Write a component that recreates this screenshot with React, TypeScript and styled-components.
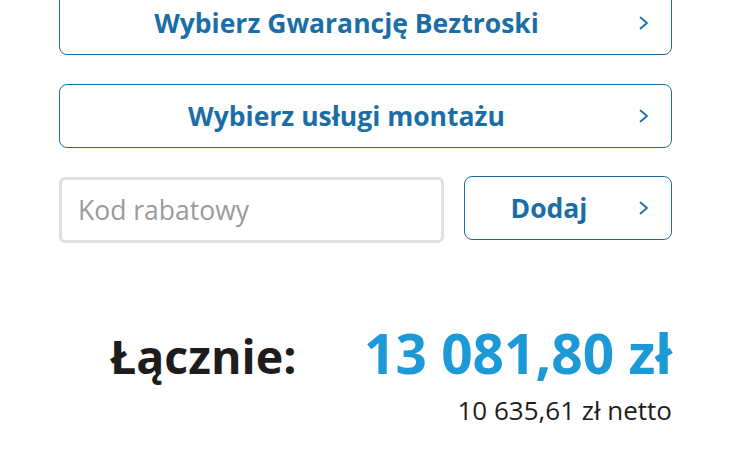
import React from "react";
import styled, {createGlobalStyle} from "styled-components";

const GlobalStyle = createGlobalStyle`
    html, body {
        margin: 0;
        padding: 0;
        background: #ffffff;
        font-family: "Open Sans", "Noto Sans", sans-serif;
    }
`

const Page = styled.div`
    width: 730px;
    height: 456px;
    overflow: hidden;
    box-sizing: border-box;
    padding: 0 58px 0 59px;
`

const Content = styled.div`
    margin-top: -9px;
    display: flex;
    flex-direction: column;
    gap: 29px;
`

const OptionButton = styled.button<{$wide?: boolean}>`
    display: flex;
    align-items: center;
    box-sizing: border-box;
    width: ${p => p.$wide ? "100%" : "208px"};
    height: 64px;
    padding: 0;
    background: #ffffff;
    border: 1.5px solid #1b6ea5;
    border-radius: 8px;
    color: #1b6ea5;
    font-family: inherit;
    font-size: 26.5px;
    font-weight: 700;
    cursor: pointer;
    .label{
        flex: 1;
        text-align: center;
    }
    .chevron{
        width: 38px;
        padding-left: 6px;
        box-sizing: border-box;
        display: flex;
        align-items: center;
        justify-content: flex-start;
    }
`

const Row = styled.div`
    display: flex;
    gap: 20px;
    margin-top: -1px;
    align-items: flex-start;
`

const CodeInput = styled.input`
    flex: 1;
    box-sizing: border-box;
    height: 66px;
    margin-top: 1px;
    padding: 0 16px;
    border: 3px solid #e0e0e0;
    border-radius: 6px;
    font-family: inherit;
    font-size: 26.5px;
    color: #333;
    outline: none;
    &::placeholder{
        color: #9a9a9a;
    }
`

const Summary = styled.div`
    display: flex;
    flex-direction: column;
    align-items: flex-end;
    margin-top: 80px;
`

const TotalLine = styled.div`
    display: flex;
    align-items: baseline;
    justify-content: space-between;
    width: 100%;
    padding-left: 51px;
    box-sizing: border-box;
`

const TotalLabel = styled.span`
    font-size: 46.5px;
    font-weight: 700;
    color: #1d1d1d;
`

const TotalPrice = styled.span`
    font-size: 55px;
    font-weight: 700;
    color: #1b9ad7;
    line-height: 1.1;
`

const NetPrice = styled.span`
    font-size: 26px;
    color: #1d1d1d;
    margin-top: 4px;
`

const Chevron = () => (
    <svg width="10" height="14" viewBox="0 0 10 14" fill="none">
        <path d="M1.5 1.5l6.5 5.5-6.5 5.5" stroke="#1b6ea5" strokeWidth="1.8" strokeLinecap="round" strokeLinejoin="round"/>
    </svg>
)

export default function App(){
    return (<>
        <GlobalStyle/>
        <Page>
            <Content>
                <OptionButton $wide>
                    <span className="label">Wybierz Gwarancję Beztroski</span>
                    <span className="chevron"><Chevron/></span>
                </OptionButton>
                <OptionButton $wide>
                    <span className="label">Wybierz usługi montażu</span>
                    <span className="chevron"><Chevron/></span>
                </OptionButton>
                <Row>
                    <CodeInput placeholder="Kod rabatowy"/>
                    <OptionButton>
                        <span className="label">Dodaj</span>
                        <span className="chevron"><Chevron/></span>
                    </OptionButton>
                </Row>
            </Content>
            <Summary>
                <TotalLine>
                    <TotalLabel>Łącznie:</TotalLabel>
                    <TotalPrice>13 081,80 zł</TotalPrice>
                </TotalLine>
                <NetPrice>10 635,61 zł netto</NetPrice>
            </Summary>
        </Page>
    </>)
}
